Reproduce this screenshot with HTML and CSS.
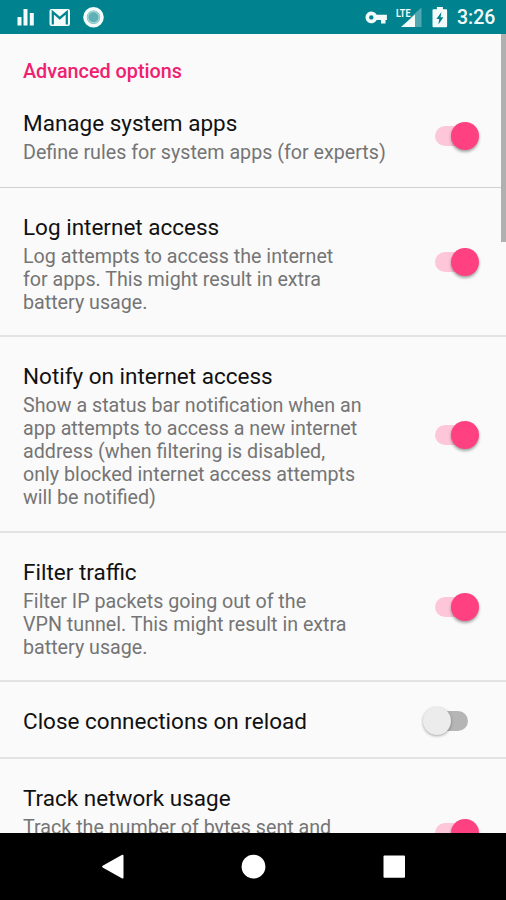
FILE: index.html
```
<!DOCTYPE html>
<html lang="en">
<head>
<meta charset="utf-8">
<title>Advanced options</title>
<link rel="stylesheet" href="styles.css">
</head>
<body>
<div class="screen">
  <header class="status">
    <svg class="status-left" viewBox="0 0 110 34" width="110" height="34">
      <g fill="#f4fbfb">
        <rect x="17.5" y="17" width="4" height="8.500"/><rect x="23.500" y="9" width="4" height="16.500"/><rect x="29.800" y="13" width="4" height="12.500"/>
        <rect x="49.500" y="9" width="20.500" height="17" rx="2"/>
      </g>
      <path d="M52.800 24.500V12.200l7 6 7-6V24.500" fill="none" stroke="#00838f" stroke-width="2.200"/>
      <circle cx="93.500" cy="17.300" r="8.500" fill="#5fb0b6" stroke="#f4fbfb" stroke-width="3.600"/>
      <circle cx="93.500" cy="17.300" r="5.700" fill="none" stroke="#a5d3d6" stroke-width="1.500"/>
    </svg>
    <div class="status-right">
      <svg viewBox="0 0 90 34" width="90" height="34">
        <path fill="#f4fbfb" fill-rule="evenodd" d="M22.900 14.800h-10.200a5.900 5.900 0 1 0 0 5.200h4.300v3.500h4.500V20h1.400zM7.300 15.200a2.200 2.200 0 1 1 0 4.400 2.200 2.200 0 0 1 0-4.400z"/>
        <path fill="#4fa8b0" d="M57.500 7.500V27H47V17z"/>
        <path fill="#f4fbfb" d="M51 14.500V27H37z"/>
        <text class="lte" x="32" y="16.500" textLength="14.500" lengthAdjust="spacingAndGlyphs">LTE</text>
        <path transform="translate(3.400 0)" fill="#f4fbfb" fill-rule="evenodd" d="M69.500 7h6v2.300h3.200q1 0 1 1V26q0 1.200-1 1.200H66.300q-1.200 0-1.200-1.200V10.300q0-1 1.200-1h3.200zM74 12l-5 7h2.800l-.8 5.500 5-7.300h-2.800z"/>
      </svg>
      <span class="clock">3:26</span>
    </div>
  </header>
  <main class="list">
    <h1 class="category">Advanced options</h1>
    <section class="row first">
      <div class="copy"><h2>Manage system apps</h2><p>Define rules for system apps (for experts)</p></div>
      <span class="switch on"></span>
    </section>
    <section class="row">
      <div class="copy"><h2>Log internet access</h2><p>Log attempts to access the internet<br>for apps. This might result in extra<br>battery usage.</p></div>
      <span class="switch on"></span>
    </section>
    <section class="row tall">
      <div class="copy"><h2>Notify on internet access</h2><p>Show a status bar notification when an<br>app attempts to access a new internet<br>address (when filtering is disabled,<br>only blocked internet access attempts<br>will be notified)</p></div>
      <span class="switch on"></span>
    </section>
    <section class="row">
      <div class="copy"><h2>Filter traffic</h2><p>Filter IP packets going out of the<br>VPN tunnel. This might result in extra<br>battery usage.</p></div>
      <span class="switch on"></span>
    </section>
    <section class="row single">
      <div class="copy"><h2>Close connections on reload</h2></div>
      <span class="switch off"></span>
    </section>
    <section class="row">
      <div class="copy"><h2>Track network usage</h2><p>Track the number of bytes sent and</p></div>
      <span class="switch on"></span>
    </section>
    <div class="scrollbar"></div>
  </main>
  <nav class="nav">
    <svg viewBox="0 0 506 67" width="506" height="67" fill="#fff">
      <path d="M102.600 32.800Q101.500 33.600 102.600 34.400L121.800 45.300Q123.500 46 123.500 44.300V23Q123.500 21.200 121.800 22z"/>
      <circle cx="253.500" cy="33.700" r="11.900"/>
      <rect x="383.500" y="22.500" width="21.500" height="22.300" rx="1"/>
    </svg>
  </nav>
</div>
</body>
</html>
```
FILE: styles.css
```
* { box-sizing: border-box; }
body { margin: 0; font-family: Roboto, "Liberation Sans", sans-serif; }
h1, h2, p { margin: 0; font-weight: 400; }
.screen { width: 506px; height: 900px; display: flex; flex-direction: column; overflow: hidden; background: #fafafa; }
.status { flex: none; height: 34px; background: #00838f; display: flex; justify-content: space-between; }
.status svg { display: block; }
.status-right { display: flex; width: 142px; }
.clock { color: #f4fbfb; font-size: 19.5px; font-weight: 500; line-height: 36px; margin-left: 3px; }
.lte { font-size: 10.5px; font-weight: 700; fill: #f4fbfb; }
.list { position: relative; flex: 1; min-height: 0; overflow: hidden; }
.category { height: 64px; padding: 26px 0 0 23px; font-size: 19.8px; font-weight: 500; line-height: 24px; color: #f02070; }
.row { height: 149px; padding: 26px 37px 0 23px; display: flex; justify-content: space-between; border-bottom: 2px solid #e3e3e3; }
.row.first { height: 90px; padding-top: 12px; border-bottom: 1px solid #d0d0d0; }
.row.tall { height: 196px; }
.row.single { height: 77px; }
.copy { white-space: nowrap; }
h2 { font-size: 22.5px; line-height: 27px; color: #111; }
p { margin-top: 5px; font-size: 19.68px; line-height: 22.9px; color: #757575; }
.switch { position: relative; flex: none; width: 34px; height: 20px; margin-top: 38px; border-radius: 10px; background: #fdc6d9; }
.switch::after { content: ""; position: absolute; top: -4px; right: -10px; width: 28px; height: 28px; border-radius: 50%; background: #ff4081; box-shadow: 0 2px 3px rgba(0,0,0,.35); }
.row.first .switch { margin-top: 16px; }
.row.tall .switch { margin-top: 62px; }
.switch.off { width: 35px; }
.row.single .switch { margin-top: 3px; margin-right: 1px; background: #b5b5b5; }
.switch.off::after { right: auto; left: -10px; background: #ececec; box-shadow: 0 1px 3px rgba(0,0,0,.35); }
.scrollbar { position: absolute; top: 0; right: 0; width: 5px; height: 208px; background: #b0b0b0; }
.nav { flex: none; height: 67px; background: #000; }
.nav svg { display: block; }
```
